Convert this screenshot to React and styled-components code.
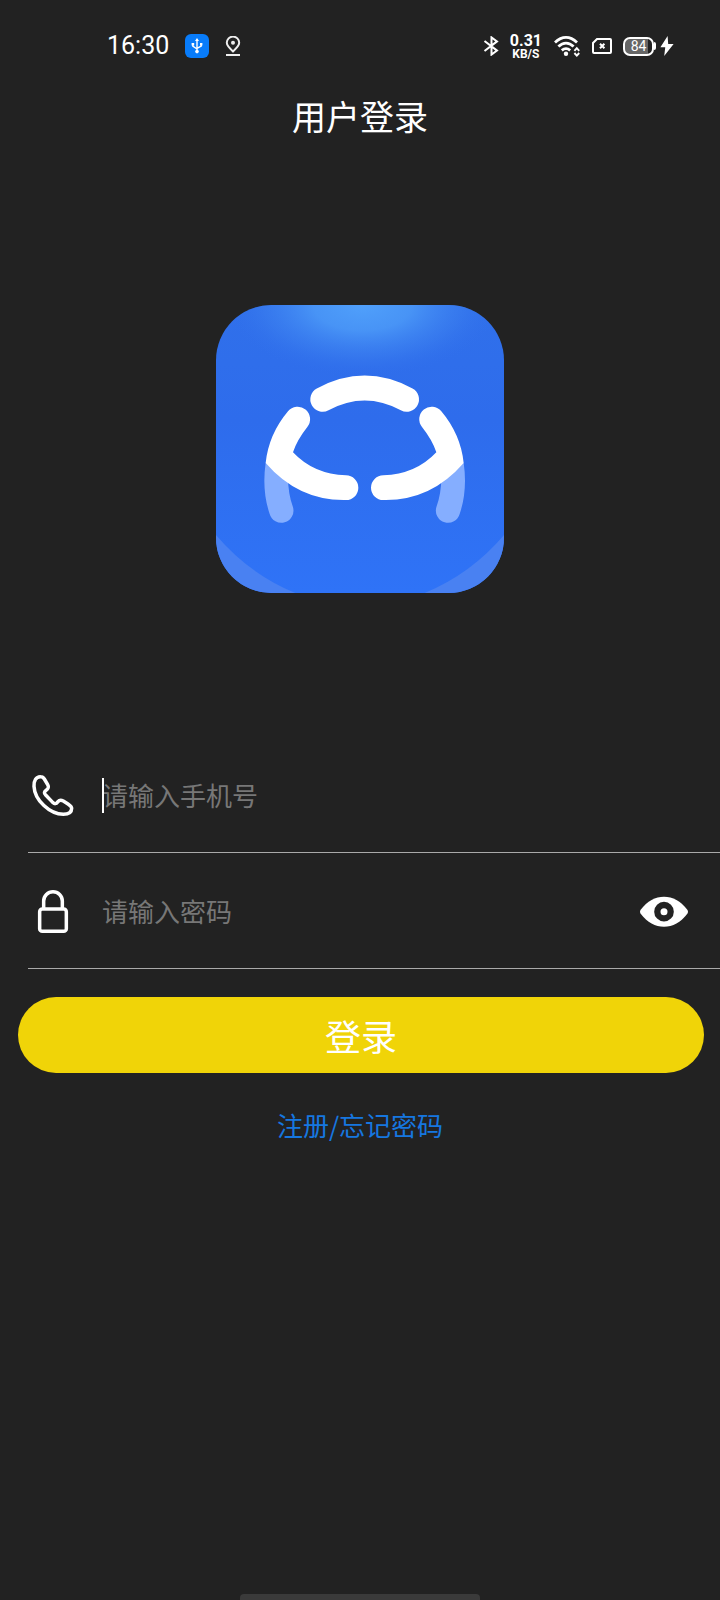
import * as React from 'react';
import styled, { createGlobalStyle } from 'styled-components';

function StatusBar() {
    return (
        <Status>
            <StatusGroup $gap="16px">
                <Time>16:30</Time>
                <UsbBadge>
                    <svg width="12" height="16" viewBox="0 0 12 16" fill="none" stroke="#fff" strokeWidth="1.4">
                        <path d="M6 2v12M1.8 6v2.2L6 11M10.2 6v2L6 10.4"/>
                        <path d="M6 0L8 3H4zM.6 5h2.6v2.4H.6zM9 5h2.4v2.4H9z" fill="#fff" stroke="none"/>
                        <circle cx="6" cy="13.6" r="1.8" fill="#fff" stroke="none"/>
                    </svg>
                </UsbBadge>
                <svg width="16" height="20" viewBox="0 0 16 20" fill="none" stroke="#eee" strokeWidth="2">
                    <path d="M8 15.4C4 11.8 1.8 9.6 1.8 6.8a6.2 6.2 0 0 1 12.4 0C14.2 9.6 12 11.8 8 15.4z"/>
                    <circle cx="8" cy="6.8" r="2" fill="#eee" stroke="none"/>
                    <path d="M1 19h14"/>
                </svg>
            </StatusGroup>
            <StatusGroup $gap="11px">
                <svg width="16" height="20" viewBox="0 0 16 20" fill="none" stroke="#fff" strokeWidth="2">
                    <path d="M1.500 5l12.500 9.600-5.500 4V1.400l5.500 4L1.500 15"/>
                </svg>
                <Rate>
                    <RateValue>0.31</RateValue>
                    <RateUnit>KB/S</RateUnit>
                </Rate>
                <svg width="28" height="22" viewBox="0 0 28 22" fill="none" stroke="#fff" strokeWidth="2.8">
                    <path d="M2 7.4C9 .8 17 .8 24 7.400M5.400 11.600c4.800-4.600 10.400-4.600 15.200 0M8.800 15.400c2.800-2.400 5.600-2.400 8.400 0"/>
                    <circle cx="13" cy="18.800" r="2.200" fill="#fff" stroke="none"/>
                    <path d="M21.400 15.800L23.800 13.200l2.400 2.600M21.400 18l2.400 2.600 2.400-2.600" strokeWidth="1.900"/>
                </svg>
                <svg width="20" height="16" viewBox="0 0 20 16" fill="none" stroke="#fff" strokeWidth="2">
                    <path d="M5 1h13q1 0 1 1v12q0 1-1 1H2q-1 0-1-1V5z"/>
                    <path d="M8 5.800l4.400 4.400M12.400 5.800l-4.400 4.400"/>
                </svg>
                <Power>
                    <Battery>84</Battery>
                    <BatteryTip/>
                    <svg width="14" height="20" viewBox="0 0 14 20" fill="#fff">
                        <path d="M7.600 0L.4 11.200h4.800v.6L4.200 20 13.600 8H8.200z"/>
                    </svg>
                </Power>
            </StatusGroup>
        </Status>
    );
}

function Logo() {
    return (
        <LogoSvg viewBox="0 0 864 864" role="img" aria-label="logo">
            <defs>
                <linearGradient id="base" x1="0" y1="0" x2="0" y2="1">
                    <stop offset="0" stopColor="#3070ea"/>
                    <stop offset="0.4" stopColor="#2e6cec"/>
                    <stop offset="1" stopColor="#2f73f7"/>
                </linearGradient>
                <radialGradient id="glow">
                    <stop offset="0" stopColor="#50a0fb"/>
                    <stop offset="0.35" stopColor="#4c9af8" stopOpacity="0.85"/>
                    <stop offset="0.7" stopColor="#3f85f2" stopOpacity="0.4"/>
                    <stop offset="1" stopColor="#2e6cec" stopOpacity="0"/>
                </radialGradient>
                <clipPath id="tile">
                    <rect width="864" height="864" rx="166"/>
                </clipPath>
                <g id="side">
                    <path d="M149 473Q137 556 161 627A36 36 0 0 0 231 607Q216 565 216 515Z" fill="#85aeff"/>
                    <path
                        d="M216 319Q158 388 149 474Q248 588 390 585A37 37 0 0 0 390 511Q293 508 231 442Q243 405 274 366A37 37 0 0 0 216 319Z"
                        fill="#fff"
                    />
                </g>
                <path id="corner" d="M0 690Q98 806 238 864H0Z" fill="#4981f2"/>
            </defs>
            <g clipPath="url(#tile)">
                <rect width="864" height="864" fill="url(#base)"/>
                <ellipse cx="440" cy="0" rx="420" ry="220" fill="url(#glow)"/>
                <use href="#corner"/>
                <use href="#corner" transform="translate(864 0) scale(-1 1)"/>
                <use href="#side"/>
                <use href="#side" transform="translate(892 0) scale(-1 1)"/>
                <path d="M320 283Q446 215 572 283" fill="none" stroke="#fff" strokeWidth="74" strokeLinecap="round"/>
            </g>
        </LogoSvg>
    );
}

function App() {
    return (
        <Page>
            <GlobalStyle/>
            <StatusBar/>
            <Title>用户登录</Title>
            <Logo/>
            <Form onSubmit={(e) => e.preventDefault()}>
                <Row>
                    <FieldIcon htmlFor="phone" aria-label="手机号">
                        <svg width="48" height="48" viewBox="84 62 144 144" fill="none" stroke="#fff" strokeWidth="10.5">
                            <path d="M122 79C108 78 101 92 102 108C104 150 150 192 190 192C205 192 215 186 215 174C215 168 210 165 204 161L190 152C184 149 178 149 174 154C168 162 164 161 158 156L137 134C131 128 133 124 138 120C146 114 147 110 143 103L133 86C130 81 127 79 122 79Z"/>
                        </svg>
                    </FieldIcon>
                    <Field>
                        <Caret/>
                        <Input id="phone" type="tel" placeholder="请输入手机号"/>
                    </Field>
                </Row>
                <Row>
                    <FieldIcon htmlFor="password" aria-label="密码">
                        <svg width="48" height="48" viewBox="84 411 144 144" fill="none" stroke="#fff" strokeWidth="10.5">
                            <rect x="119" y="477" width="80" height="67" rx="8"/>
                            <path d="M131 476V453a28 28 0 0 1 56 0V476"/>
                        </svg>
                    </FieldIcon>
                    <Field>
                        <Input id="password" type="password" placeholder="请输入密码"/>
                    </Field>
                    <EyeButton type="button" aria-label="显示密码">
                        <svg width="48" height="32" viewBox="0 0 144 96">
                            <path d="M2 44C22 18 46 5 72 5S122 18 142 44Q146 50 142 56C122 82 98 95 72 95S22 82 2 56Q-2 50 2 44Z" fill="#fff"/>
                            <circle cx="72" cy="50" r="20" fill="none" stroke="#222" strokeWidth="19"/>
                        </svg>
                    </EyeButton>
                </Row>
                <LoginButton type="submit">登录</LoginButton>
            </Form>
            <RegisterLink href="#register">注册/忘记密码</RegisterLink>
            <HomeBar/>
        </Page>
    );
}

const GlobalStyle = createGlobalStyle`
  * {
    box-sizing: border-box;
  }
  body {
    margin: 0;
    background: #222;
    color: #fff;
    font-family: 'Noto Sans CJK SC', sans-serif;
  }
  svg {
    display: block;
    flex-shrink: 0;
  }
`;

const Page = styled.main`
  display: flex;
  flex-direction: column;
  align-items: center;
  min-height: 100vh;
`;

const Status = styled.header`
  display: flex;
  align-items: center;
  justify-content: space-between;
  align-self: stretch;
  height: 92px;
  padding: 0 46px 0 107px;
  font-family: Roboto, sans-serif;
`;

const StatusGroup = styled.div`
  display: flex;
  align-items: center;
  gap: ${(props) => props.$gap};
`;

const Time = styled.span`
  font-size: 25px;
  line-height: 28px;
`;

const UsbBadge = styled.span`
  display: flex;
  align-items: center;
  justify-content: center;
  width: 24px;
  height: 24px;
  border-radius: 6px;
  background: #087cfa;
`;

const Rate = styled.div`
  display: flex;
  flex-direction: column;
  align-items: center;
  padding-top: 2px;
  font-weight: 700;
`;

const RateValue = styled.span`
  font-size: 16px;
  line-height: 14px;
`;

const RateUnit = styled.span`
  font-size: 12px;
  line-height: 12px;
`;

const Power = styled.div`
  display: flex;
  align-items: center;
`;

const Battery = styled.span`
  width: 31px;
  height: 19px;
  border: 2px solid #fff;
  border-radius: 7px;
  background: linear-gradient(90deg, #666 84%, #222 84%);
  font-size: 14px;
  line-height: 15px;
  text-align: center;
`;

const BatteryTip = styled.span`
  width: 2px;
  height: 8px;
  margin-right: 4px;
  border-radius: 0 2px 2px 0;
  background: #fff;
`;

const Title = styled.h1`
  margin: 0;
  font-size: 34px;
  font-weight: 400;
  line-height: 48px;
`;

const LogoSvg = styled.svg`
  width: 40%;
  max-width: 320px;
  margin: 165px 0 144px;
`;

const Form = styled.form`
  display: flex;
  flex-direction: column;
  align-self: stretch;
`;

const Row = styled.div`
  display: flex;
  align-items: center;
  height: 116px;
  margin-left: 28px;
  padding-right: 32px;
  border-bottom: 1px solid #aaa;
`;

const FieldIcon = styled.label`
  margin-right: 26px;
`;

const Field = styled.div`
  position: relative;
  flex: 1;
`;

const Caret = styled.span`
  position: absolute;
  top: 3px;
  left: 0;
  width: 2px;
  height: 35px;
  background: #fff;
`;

const Input = styled.input`
  display: block;
  width: 100%;
  height: 40px;
  padding: 0;
  border: 0;
  outline: 0;
  background: transparent;
  color: #fff;
  font-family: inherit;
  font-size: 26px;
  &::placeholder {
    color: #777;
    opacity: 1;
  }
`;

const EyeButton = styled.button`
  padding: 0;
  border: 0;
  background: transparent;
`;

const LoginButton = styled.button`
  height: 76px;
  margin: 28px 16px 0 18px;
  padding: 0;
  border: 0;
  border-radius: 38px;
  background: #f0d408;
  color: #fff;
  font-family: inherit;
  font-size: 36px;
`;

const RegisterLink = styled.a`
  margin: 34px 0;
  color: #1677e0;
  font-size: 26px;
  line-height: 36px;
  text-decoration: none;
`;

const HomeBar = styled.div`
  width: 240px;
  height: 6px;
  margin-top: auto;
  border-radius: 4px 4px 0 0;
  background: #3a3a3a;
`;

export default App;
